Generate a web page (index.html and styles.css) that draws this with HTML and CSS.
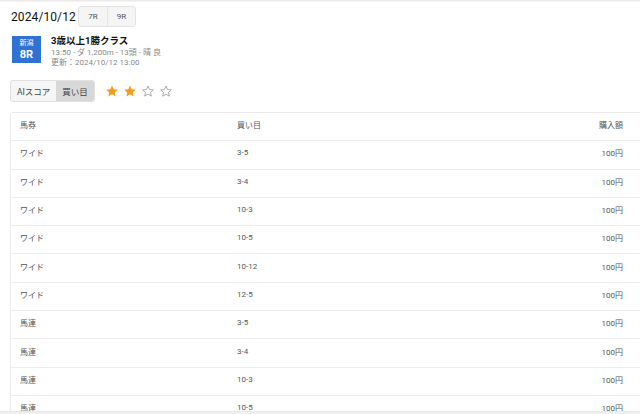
FILE: index.html
```html
<!DOCTYPE html>
<html lang="ja">
<head>
<meta charset="utf-8">
<link rel="stylesheet" href="styles.css">
</head>
<body>
<div class="topshadow"></div>
<main class="page">
  <div class="datebar">
    <span class="date">2024/10/12</span>
    <div class="racenav">
      <span class="racebtn">7R</span>
      <span class="racebtn">9R</span>
    </div>
  </div>
  <div class="raceinfo">
    <div class="badge">
      <span class="badge-place">新潟</span>
      <span class="badge-num">8R</span>
    </div>
    <div class="racetext">
      <div class="racetitle">3歳以上1勝クラス</div>
      <div class="racemeta">13:50 - ダ 1,200m - 13頭 - 晴 良</div>
      <div class="racemeta">更新：2024/10/12 13:00</div>
    </div>
  </div>
  <div class="controls">
    <div class="toggle">
      <span class="tog">AIスコア</span>
      <span class="tog active">買い目</span>
    </div>
    <div class="stars">
      <svg class="star" viewBox="0 0 24 24"><path class="fill" d="M12 2.5l2.9 6.6 7.1.6-5.4 4.7 1.6 7-6.2-3.7-6.2 3.7 1.6-7L2 9.7l7.1-.6z"/></svg>
      <svg class="star" viewBox="0 0 24 24"><path class="fill" d="M12 2.5l2.9 6.6 7.1.6-5.4 4.7 1.6 7-6.2-3.7-6.2 3.7 1.6-7L2 9.7l7.1-.6z"/></svg>
      <svg class="star" viewBox="0 0 24 24"><path class="empty" d="M12 3.5l2.6 6 6.5.6-4.9 4.3 1.5 6.4L12 17.4l-5.7 3.4 1.5-6.4-4.9-4.3 6.5-.6z"/></svg>
      <svg class="star" viewBox="0 0 24 24"><path class="empty" d="M12 3.5l2.6 6 6.5.6-4.9 4.3 1.5 6.4L12 17.4l-5.7 3.4 1.5-6.4-4.9-4.3 6.5-.6z"/></svg>
    </div>
  </div>
  <div class="card">
    <div class="row head">
      <span class="c1">馬券</span><span class="c2">買い目</span><span class="c3">購入額</span>
    </div>
    <div class="row"><span class="c1">ワイド</span><span class="c2">3-5</span><span class="c3">100円</span></div>
    <div class="row"><span class="c1">ワイド</span><span class="c2">3-4</span><span class="c3">100円</span></div>
    <div class="row"><span class="c1">ワイド</span><span class="c2">10-3</span><span class="c3">100円</span></div>
    <div class="row"><span class="c1">ワイド</span><span class="c2">10-5</span><span class="c3">100円</span></div>
    <div class="row"><span class="c1">ワイド</span><span class="c2">10-12</span><span class="c3">100円</span></div>
    <div class="row"><span class="c1">ワイド</span><span class="c2">12-5</span><span class="c3">100円</span></div>
    <div class="row"><span class="c1">馬連</span><span class="c2">3-5</span><span class="c3">100円</span></div>
    <div class="row"><span class="c1">馬連</span><span class="c2">3-4</span><span class="c3">100円</span></div>
    <div class="row"><span class="c1">馬連</span><span class="c2">10-3</span><span class="c3">100円</span></div>
    <div class="row"><span class="c1">馬連</span><span class="c2">10-5</span><span class="c3">100円</span></div>
  </div>
</main>
<div class="bottombar"></div>
</body>
</html>
```
FILE: styles.css
```css
* { box-sizing: border-box; }
html, body { margin: 0; padding: 0; background: #fff; overflow: hidden; }
body {
  font-family: Roboto, "Noto Sans CJK JP", sans-serif;
  color: #222;
  height: 414px;
}
.topshadow {
  position: fixed; top: 0; left: 0; right: 0; height: 2px;
  background: linear-gradient(#e6e6e6, #f8f8f8);
}
.bottombar {
  position: fixed; bottom: 0; left: 0; right: 0; height: 3px;
  background: #f0f0f0;
  border-top: 1px solid #e8e8e8;
  z-index: 2;
}
.page { padding: 6px 0 0 10px; }
.datebar { display: flex; align-items: center; gap: 2px; height: 21px; }
.date { font-size: 12px; color: #111; padding-left: 1px; letter-spacing: 0.1px; }
.racenav {
  display: flex; border: 1px solid #e3e3e3; border-radius: 3px; background: #f5f5f5;
  height: 21px;
}
.racebtn {
  width: 28px; display: flex; align-items: center; justify-content: center;
  font-size: 8px; color: #555;
}
.racebtn + .racebtn { border-left: 1px solid #e3e3e3; }
.raceinfo { display: flex; gap: 10px; margin-top: 9px; padding-left: 2px; }
.badge {
  width: 29px; height: 27px; background: #2f72d4;
  display: flex; flex-direction: column; align-items: center; justify-content: center;
  color: #fff; line-height: 1;
}
.badge-place { font-size: 7px; margin-bottom: 2px; }
.badge-num { font-size: 11px; font-weight: bold; }
.racetext { line-height: 1; }
.racetitle { font-size: 9.5px; font-weight: bold; color: #111; height: 12px; }
.racemeta { font-size: 8px; color: #8a8a8a; height: 10px; line-height: 10px; }
.controls { display: flex; align-items: center; gap: 10px; margin-top: 12px; }
.toggle {
  display: flex; border: 1px solid #e0e0e0; border-radius: 3px; background: #f6f6f6;
  height: 22px; overflow: hidden;
}
.tog { display: flex; align-items: center; padding: 0 6px; font-size: 8.5px; color: #444; }
.tog.active { background: #d8d8d8; }
.stars { display: flex; gap: 4px; }
.star { width: 14px; height: 14px; }
.star .fill { fill: #f39b1a; }
.star .empty { fill: none; stroke: #999; stroke-width: 1.4; stroke-linejoin: round; }
.card {
  margin-top: 10px; margin-right: -2px;
  border: 1px solid #ebebeb; border-radius: 3px;
}
.row {
  display: flex; align-items: center; height: 28.3px;
  border-top: 1px solid #ececec; font-size: 8px; color: #555;
  padding: 0 18px 4px 9px;
}
.row.head { border-top: none; height: 27.3px; }
.c1 { width: 217px; }
.c2 { flex: 1; }
.c3 { text-align: right; }
```
